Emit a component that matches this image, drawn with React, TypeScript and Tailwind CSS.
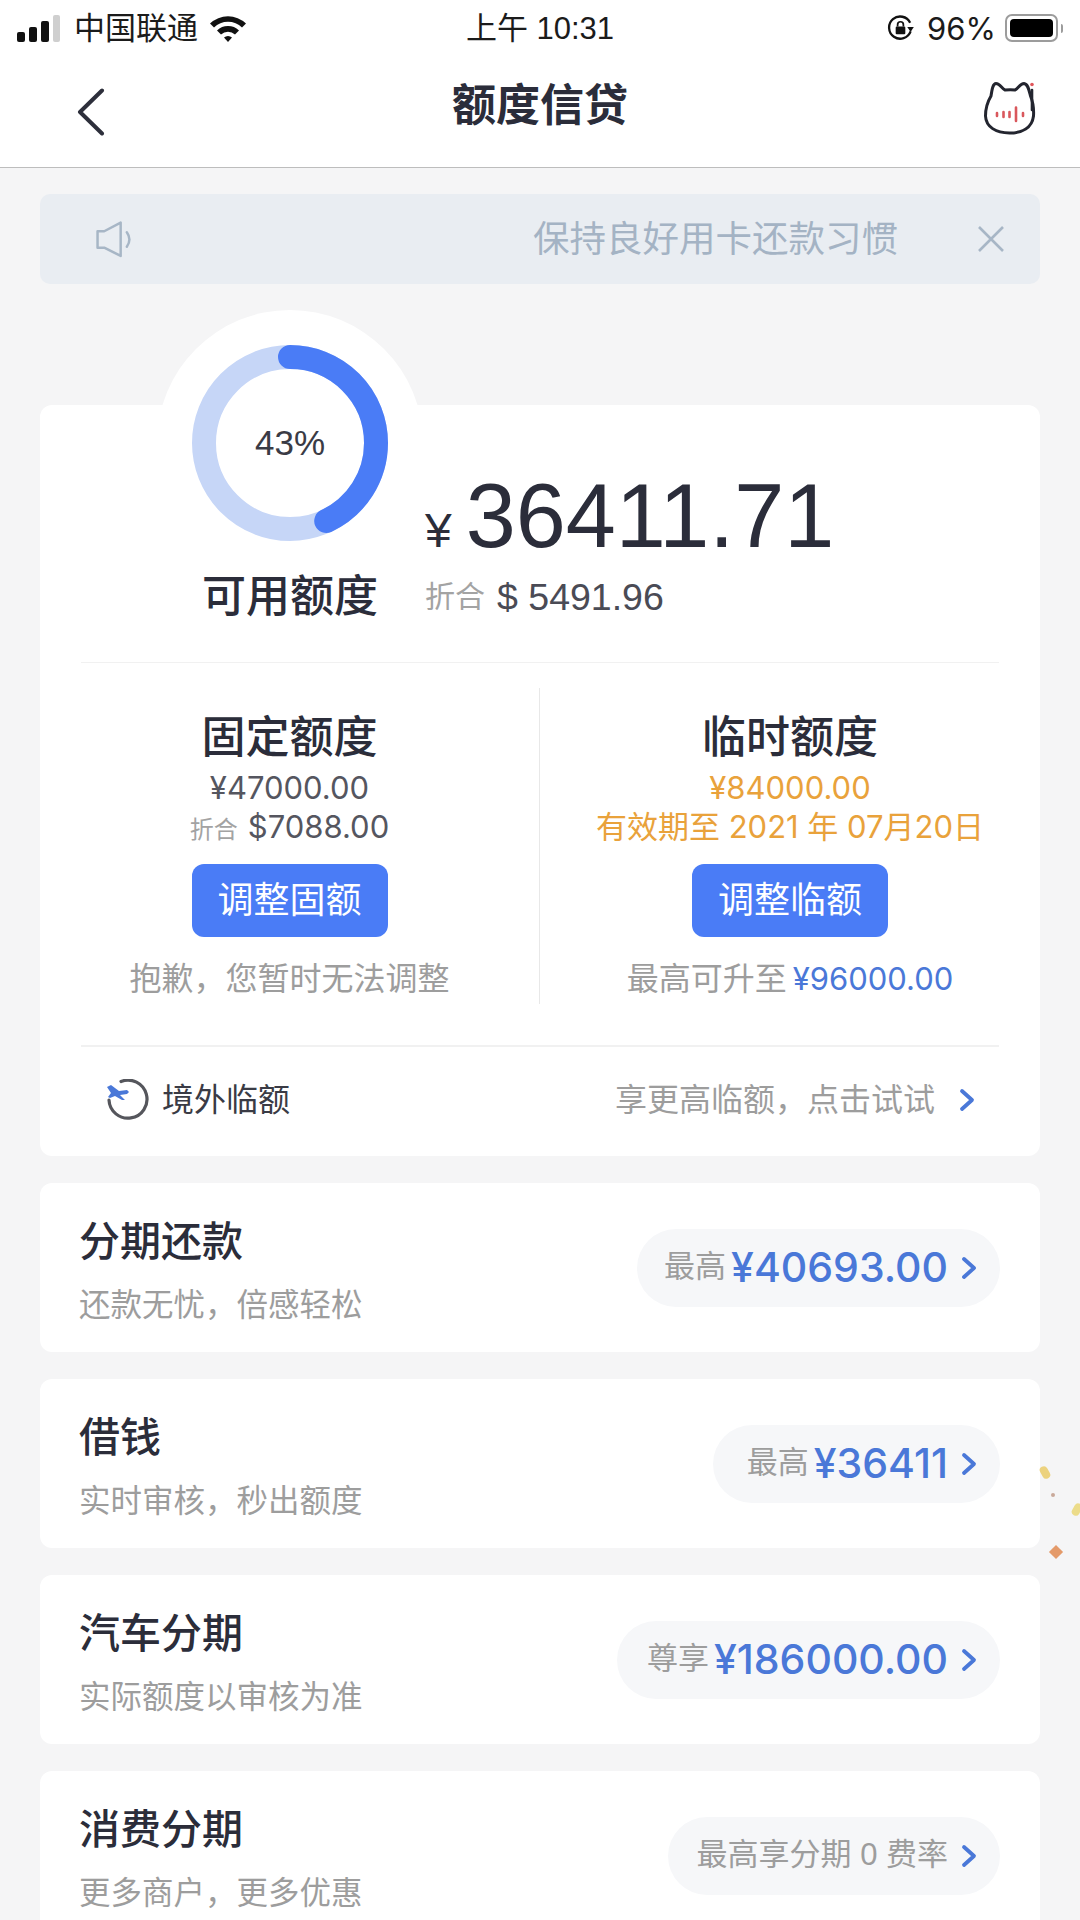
const FONT = "[font-family:'Liberation_Sans','Noto_Sans_CJK_SC',sans-serif]";
const NUM = "[font-family:'Inter','Noto_Sans_CJK_SC',sans-serif]";

function Chevron({ className }: { className?: string }) {
  return (
    <svg viewBox="0 0 16 24" className={className} fill="none">
      <path d="M3 3 L13 12 L3 21" stroke="#4a78d8" strokeWidth="3.8" strokeLinecap="round" strokeLinejoin="round" />
    </svg>
  );
}

function StatusBar() {
  return (
    <div className="relative flex h-[56px] shrink-0 items-center justify-between bg-white pl-[17px] pr-[17px] text-[#1b1b1b]">
      <div className="flex items-center">
        <div className="flex h-[27px] items-end gap-[4px]">
          <div className="h-[10px] w-[8px] rounded-[2px] bg-[#111]" />
          <div className="h-[15px] w-[8px] rounded-[2px] bg-[#111]" />
          <div className="h-[21px] w-[8px] rounded-[2px] bg-[#111]" />
          <div className="h-[27px] w-[7px] rounded-[2px] bg-[#cfcfcf]" />
        </div>
        <span className="ml-[14px] text-[31px] leading-none">中国联通</span>
        <svg viewBox="0 0 38 28" className="ml-[11px] h-[28px] w-[38px]">
          <path d="M1 9.5 A26 26 0 0 1 37 9.5 L33 13.5 A20 20 0 0 0 5 13.5 Z" fill="#111" />
          <path d="M8 16.5 A16 16 0 0 1 30 16.5 L26 20.5 A10.5 10.5 0 0 0 12 20.5 Z" fill="#111" />
          <path d="M15 23.5 A6 6 0 0 1 23 23.5 L19 28 Z" fill="#111" />
        </svg>
      </div>
      <div className="flex items-center">
        <svg viewBox="0 0 28 28" className="h-[27px] w-[27px]" fill="none">
          <path d="M24.5 17 A11.5 11.5 0 1 1 24 8" stroke="#111" strokeWidth="2.4" />
          <path d="M21 12.5 L27.8 12.5 L24.5 17.5 Z" fill="#111" />
          <rect x="9" y="12" width="10" height="8" rx="1.2" fill="#111" />
          <path d="M11 12 V10 A3 3 0 0 1 17 10 V12" stroke="#111" strokeWidth="1.8" />
        </svg>
        <span className={`ml-[13px] text-[31px] leading-none ${NUM}`}>96%</span>
        <div className="ml-[9px] flex h-[28px] w-[53px] items-center rounded-[7px] border-[2px] border-[#9c9c9c] p-[3px]">
          <div className="h-full w-full rounded-[4px] bg-black" />
        </div>
        <div className="ml-[3px] h-[9px] w-[2px] rounded-r bg-[#9c9c9c]" />
      </div>
      <span className="absolute left-0 right-0 top-[13px] text-center text-[31px] leading-none">上午 10:31</span>
    </div>
  );
}

function NavBar() {
  return (
    <div className="relative flex h-[112px] shrink-0 items-center justify-between border-b border-[#bdbdbd] bg-white pl-[77px] pr-[44px]">
      <svg viewBox="0 0 28 48" className="h-[48px] w-[28px]" fill="none">
        <path d="M25 2.5 L3 24 L25 45.5" stroke="#2d2f3b" strokeWidth="4" strokeLinecap="round" strokeLinejoin="round" />
      </svg>
      <span className="absolute left-0 right-0 top-[22px] text-center text-[44px] font-bold leading-[56px] text-[#2b2d3a]">额度信贷</span>
      <svg viewBox="0 0 54 56" className="mb-[8px] h-[56px] w-[54px]" fill="none">
        <path d="M3.5 36 C3.5 27 6 21 9 16 C10 9 11 3.5 14 3.5 C18 3.5 20 9 23 10 C27 9.5 30 9.5 33 10 C36 9 38 3.5 42 3.5 C46 4 47 10 48.5 16 C51 22 52 28 51.5 36 C50 48 40 53 27.5 53 C14 53 4 47 3.5 36 Z" fill="#fff" stroke="#23252f" strokeWidth="3" />
        <path d="M50 10 V30" stroke="#23252f" strokeWidth="2.6" strokeLinecap="round" />
        <circle cx="50" cy="4.5" r="1.8" fill="#e0555a" />
        <path d="M15 33 V36 M21.5 32 V37 M27.5 32 V37 M34 27.5 V41 M41 33 V36" stroke="#d9575c" strokeWidth="2.6" strokeLinecap="round" />
      </svg>
    </div>
  );
}

function Banner() {
  return (
    <div className="relative mx-[40px] mt-[26px] flex h-[90px] shrink-0 items-center justify-between rounded-[10px] bg-[#e9edf2] pl-[56px] pr-[35px]">
      <svg viewBox="0 0 36 36" className="h-[37px] w-[37px]" fill="none">
        <path d="M1.5 10 H8 L24 1.5 V34 L8 26 H1.5 Z" stroke="#a7b6c6" strokeWidth="2.4" strokeLinejoin="round" />
        <path d="M30 11 Q35 18 30 25" stroke="#a7b6c6" strokeWidth="2.4" strokeLinecap="round" />
      </svg>
      <span className="absolute left-[493px] top-[23px] text-[36.5px] leading-[46px] text-[#a4b3c4]">保持良好用卡还款习惯</span>
      <svg viewBox="0 0 28 28" className="h-[28px] w-[28px]" fill="none">
        <path d="M2 2 L26 26 M26 2 L2 26" stroke="#a7b6c6" strokeWidth="2.6" />
      </svg>
    </div>
  );
}

function Ring() {
  const r = 86;
  const c = 2 * Math.PI * r;
  return (
    <div className="relative h-[196px] w-[196px]">
      <svg viewBox="0 0 196 196" className="h-[196px] w-[196px] -rotate-90">
        <circle cx="98" cy="98" r={r} fill="none" stroke="#c6d6f7" strokeWidth="24" />
        <circle cx="98" cy="98" r={r} fill="none" stroke="#4a7cf6" strokeWidth="24" strokeLinecap="round" strokeDasharray={`${c * 0.43} ${c}`} />
      </svg>
      <span className="absolute inset-0 flex items-center justify-center text-[35px] text-[#3a3b45]">43%</span>
    </div>
  );
}

function QuotaColumn({
  title, children, button, note, border,
}: { title: string; children: React.ReactNode; button: string; note: React.ReactNode; border?: boolean }) {
  return (
    <div className={`flex h-[316px] flex-col items-center ${border ? "border-r border-[#e8e8e8]" : ""}`}>
      <div className="mt-[22px] text-[44px] font-medium leading-[56px] text-[#2b2d3a]">{title}</div>
      <div className="mt-[3px] flex h-[90px] flex-col items-center justify-start">{children}</div>
      <div className="mt-[5px] flex h-[73px] w-[196px] items-center justify-center rounded-[12px] bg-[#4a7cf6] text-[36px] text-white">{button}</div>
      <div className="mt-[21px] flex items-baseline text-[32px] leading-[42px] text-[#9d9d9d]">{note}</div>
    </div>
  );
}

function MainCard() {
  return (
    <div className="relative mx-[40px] mt-[121px] h-[751px] shrink-0 rounded-[12px] bg-white">
      <div className="absolute left-[117px] top-[-95px] h-[266px] w-[266px] rounded-full bg-white" />
      <div className="relative mx-[41px] flex h-[258px] border-b border-[#f1f1f1]">
        <div className="ml-[74px] flex w-[270px] shrink-0 flex-col items-center">
          <div className="mt-[-60px]"><Ring /></div>
          <div className="mt-[28px] text-[44px] font-medium leading-[56px] text-[#2b2d3a]">可用额度</div>
        </div>
        <div className="flex flex-col">
          <div className="mt-[57px] flex h-[112px] items-baseline">
            <span className="text-[48px] leading-none text-[#2b2d3a]">¥</span>
            <span className="ml-[14px] text-[90px] leading-[108px] text-[#2b2d3a]">36411.71</span>
          </div>
          <div className="flex items-center">
            <span className="text-[30px] leading-[46px] text-[#a3a3a3]">折合</span>
            <span className="ml-[12px] text-[37.5px] leading-[46px] text-[#4a4b55]">$ 5491.96</span>
          </div>
        </div>
      </div>
      <div className="mt-[25px] grid grid-cols-2">
        <QuotaColumn title="固定额度" border button="调整固额" note="抱歉，您暂时无法调整">
          <div className={`text-[31px] leading-[38px] text-[#55565f] ${NUM}`}>¥47000.00</div>
          <div className="flex items-baseline leading-[40px]">
            <span className="text-[24px] text-[#a3a3a3]">折合</span>
            <span className={`ml-[10px] text-[31px] text-[#55565f] ${NUM}`}>$7088.00</span>
          </div>
        </QuotaColumn>
        <QuotaColumn
          title="临时额度"
          button="调整临额"
          note={<>最高可升至<span className={`ml-[6px] text-[31px] text-[#4a78d8] ${NUM}`}>¥96000.00</span></>}
        >
          <div className={`text-[31px] leading-[38px] text-[#e9a23b] ${NUM}`}>¥84000.00</div>
          <div className={`text-[31px] leading-[40px] text-[#e9a23b] ${NUM}`}>有效期至 2021 年 07月20日</div>
        </QuotaColumn>
      </div>
      <div className="mx-[41px] mt-[41px] flex h-[110px] items-center justify-between border-t-2 border-[#f1f1f1] pb-[2px] pl-[26px] pr-[24px]">
        <div className="flex items-center">
          <svg viewBox="0 0 42 42" className="h-[42px] w-[42px]" fill="none">
            <path d="M14 2.5 A19 19 0 1 1 2 21" stroke="#55565c" strokeWidth="3.2" strokeLinecap="round" />
            <path d="M0 8 L4 6 L12 12 L20 11 L22 13 L20 15 L13 16 L18 21 L15 21 L8 17 L3 19 L1 18 L4 14 Z" fill="#4a78d8" />
          </svg>
          <span className="ml-[13px] text-[32px] leading-none text-[#3a3b45]">境外临额</span>
        </div>
        <div className="flex items-center">
          <span className="text-[32px] leading-none text-[#9d9d9d]">享更高临额，点击试试</span>
          <Chevron className="ml-[24px] h-[24px] w-[16px]" />
        </div>
      </div>
    </div>
  );
}

function ListCard({
  title, sub, label, amount, pillW,
}: { title: string; sub: string; label: string; amount?: string; pillW: number }) {
  return (
    <div className="mx-[40px] mt-[27px] flex h-[169px] shrink-0 items-center justify-between rounded-[12px] bg-white pl-[39px] pr-[40px]">
      <div className="flex flex-col pt-[5px]">
        <div className="text-[41px] font-medium leading-[56px] text-[#2b2d3a]">{title}</div>
        <div className="mt-[14px] text-[31.5px] leading-[42px] text-[#9d9d9d]">{sub}</div>
      </div>
      <div className="flex h-[78px] items-center justify-end rounded-full bg-[#f6f7f9] pr-[23px]" style={{ width: pillW }}>
        <span className="text-[31px] text-[#9d9d9d]">{label}</span>
        {amount && <span className={`ml-[5px] text-[41px] font-medium text-[#4a78d8] ${NUM}`}>{amount}</span>}
        <Chevron className="ml-[13px] h-[24px] w-[16px]" />
      </div>
    </div>
  );
}

function Confetti() {
  return (
    <div className="absolute left-[1038px] top-[1455px] h-[110px] w-[42px]">
      <div className="absolute left-[3px] top-[11px] h-[13px] w-[8px] -rotate-30 rounded-full bg-[#ecd27e]" />
      <div className="absolute left-[13px] top-[38px] h-[4px] w-[4px] rounded-full bg-[#c9a99a]" />
      <div className="absolute left-[35px] top-[48px] h-[13px] w-[8px] rotate-30 rounded-full bg-[#ecdc8a]" />
      <div className="absolute left-[13px] top-[92px] h-[10px] w-[10px] rotate-45 bg-[#e49a6a]" />
    </div>
  );
}

export default function App() {
  return (
    <div className={`relative flex h-[1920px] w-[1080px] flex-col overflow-hidden bg-[#f5f5f6] ${FONT}`}>
      <StatusBar />
      <NavBar />
      <Banner />
      <MainCard />
      <ListCard title="分期还款" sub="还款无忧，倍感轻松" label="最高" amount="¥40693.00" pillW={363} />
      <ListCard title="借钱" sub="实时审核，秒出额度" label="最高" amount="¥36411" pillW={287} />
      <ListCard title="汽车分期" sub="实际额度以审核为准" label="尊享" amount="¥186000.00" pillW={383} />
      <ListCard title="消费分期" sub="更多商户，更多优惠" label="最高享分期 0 费率" pillW={332} />
      <Confetti />
    </div>
  );
}
